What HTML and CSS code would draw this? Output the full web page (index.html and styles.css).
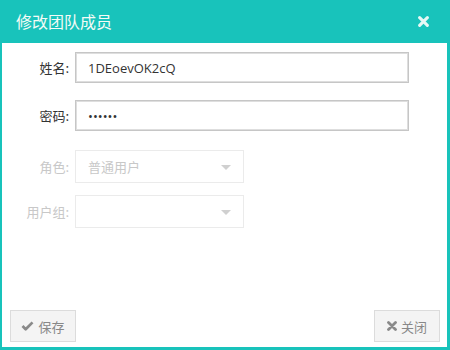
FILE: index.html
```html
<!DOCTYPE html>
<html lang="zh">
<head>
<meta charset="utf-8">
<title>修改团队成员</title>
<link rel="stylesheet" href="styles.css">
</head>
<body>
<div class="dialog">
  <div class="dialog-header">
    <span class="dialog-title">修改团队成员</span>
    <svg class="close-x" viewBox="0 0 10 10" width="11" height="11"><path d="M1.5 1.5 L8.5 8.5 M8.5 1.5 L1.5 8.5" stroke="currentColor" stroke-width="2.8" stroke-linecap="round"/></svg>
  </div>
  <div class="dialog-body">
    <form class="form">
      <label class="lbl">姓名:</label>
      <input class="txt" type="text" value="1DEoevOK2cQ">
      <label class="lbl">密码:</label>
      <input class="txt" type="password" value="123456">
      <label class="lbl dis sel-first">角色:</label>
      <div class="sel sel-first"><span>普通用户</span><i class="caret"></i></div>
      <label class="lbl dis">用户组:</label>
      <div class="sel"><span></span><i class="caret"></i></div>
    </form>
    <div class="footer">
      <button class="btn" type="button">
        <svg viewBox="0 0 14 11" width="13" height="10"><path d="M1.5 5.5 L5 9 L12.5 1.5" fill="none" stroke="currentColor" stroke-width="3" stroke-linejoin="round"/></svg>
        保存
      </button>
      <button class="btn" type="button">
        <svg viewBox="0 0 10 10" width="10" height="10"><path d="M1.5 1.5 L8.5 8.5 M8.5 1.5 L1.5 8.5" stroke="currentColor" stroke-width="2.8" stroke-linecap="round"/></svg>
        关闭
      </button>
    </div>
  </div>
</div>
</body>
</html>
```
FILE: styles.css
```css
html, body {
  margin: 0;
  padding: 0;
  background: #fff;
}
body {
  font-family: "Open Sans", "Noto Sans CJK SC", sans-serif;
  font-size: 13px;
  color: #333;
}
.dialog {
  width: 450px;
  height: 350px;
  box-sizing: border-box;
  border-left: 2px solid #18c3bb;
  border-right: 3px solid #18c3bb;
  border-bottom: 3px solid #18c3bb;
  display: flex;
  flex-direction: column;
  background: #fff;
}
.dialog-header {
  height: 43px;
  margin: 0 -3px 0 -2px;
  background: #18c3bb;
  display: flex;
  align-items: center;
  justify-content: space-between;
  padding: 0 21px 0 16px;
  flex: none;
}
.dialog-title {
  color: #f4fbf6;
  font-family: "Noto Sans CJK SC", sans-serif;
  font-size: 16px;
  line-height: 1;
  position: relative;
  top: -1px;
}
.close-x {
  color: #e6f8f5;
  display: block;
}
.dialog-body {
  flex: 1;
  display: flex;
  flex-direction: column;
}
.form {
  display: grid;
  grid-template-columns: 67px 334px;
  column-gap: 6px;
  row-gap: 17px;
  margin-top: 9px;
  align-items: center;
}
.lbl {
  text-align: right;
  font-family: "Noto Sans CJK SC", sans-serif;
  font-size: 13px;
  color: #333;
}
.lbl.dis {
  color: #c8c8c8;
}
.sel-first {
  margin-top: 2px;
}
.txt {
  height: 31px;
  box-sizing: border-box;
  margin: 0;
  border: 1px solid #c6c6c6;
  box-shadow: inset 0 0 0 1px #dedede;
  padding: 0 12px;
  font-family: "Open Sans", "Noto Sans CJK SC", sans-serif;
  font-size: 13px;
  color: #333;
  outline: none;
  width: 334px;
}
.sel {
  width: 169px;
  height: 33px;
  box-sizing: border-box;
  border: 1px solid #ebebeb;
  display: flex;
  align-items: center;
  justify-content: space-between;
  padding: 0 12px 0 12px;
  color: #c8c8c8;
  font-family: "Noto Sans CJK SC", sans-serif;
  font-size: 13px;
}
.sel + .lbl {
  margin-top: -5px;
}
.sel:last-child {
  margin-top: -5px;
}
.caret {
  width: 0;
  height: 0;
  border-left: 5px solid transparent;
  border-right: 5px solid transparent;
  border-top: 5px solid #d0d0d0;
  margin-top: 1px;
}
.footer {
  margin-top: auto;
  display: flex;
  justify-content: space-between;
  padding: 0 7px 5px 8px;
}
.btn {
  width: 66px;
  height: 32px;
  box-sizing: border-box;
  border: 1px solid #dcdcdc;
  background: #f4f4f4;
  color: #888;
  font-family: "Noto Sans CJK SC", sans-serif;
  font-size: 13px;
  display: flex;
  align-items: center;
  justify-content: center;
  gap: 4px;
  padding: 0;
  margin: 0;
}
.btn svg {
  display: block;
  color: #8a8a8a;
}
```
